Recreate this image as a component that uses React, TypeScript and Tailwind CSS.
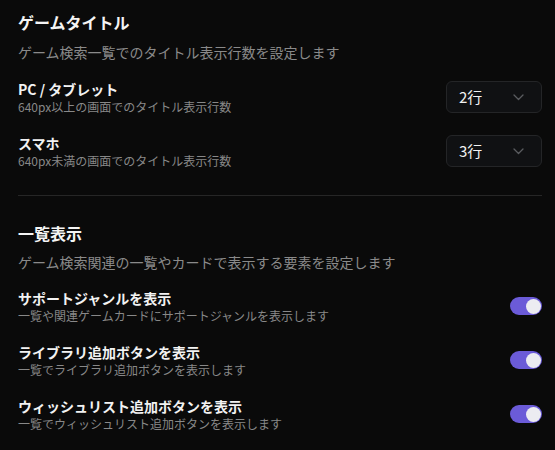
import React from "react";

function Select({ value }: { value: string }) {
  return (
    <div className="flex h-8 w-[96px] shrink-0 items-center justify-between rounded-md border border-[#242527] bg-[#101113] pl-3 pr-[17px]">
      <span className="text-[15px] leading-5 text-[#f2f2f2]">{value}</span>
      <svg width="11" height="7" viewBox="0 0 11 7" fill="none">
        <path d="M1 1l4.5 4.5L10 1" stroke="#5a5c60" strokeWidth="1.3" strokeLinecap="round" strokeLinejoin="round" />
      </svg>
    </div>
  );
}

function Toggle() {
  return (
    <div className="flex h-[18px] w-[32px] shrink-0 items-center justify-end rounded-full bg-[#6b5bd8] p-[1.5px]">
      <div className="h-[15px] w-[15px] rounded-full bg-[#ececf1]" />
    </div>
  );
}

function Row({ title, sub, right }: { title: string; sub: string; right: React.ReactNode }) {
  return (
    <div className="flex items-center justify-between">
      <div className="flex flex-col">
        <div className="text-sm font-bold leading-5 text-[#f2f2f2]">{title}</div>
        <div className="text-xs leading-4 text-[#888888]">{sub}</div>
      </div>
      {right}
    </div>
  );
}

export default function App() {
  return (
    <div
      className="min-h-[450px] bg-[#0a0a0a] pl-[18px] pr-[13px] pt-[10px]"
      style={{ fontFamily: '"Noto Sans CJK JP", "Noto Sans", sans-serif' }}
    >
      <section>
        <h2 className="text-base font-bold leading-6 text-[#f4f4f4]">ゲームタイトル</h2>
        <p className="mt-2 text-sm leading-5 text-[#8a8a8a]">ゲーム検索一覧でのタイトル表示行数を設定します</p>
        <div className="mt-[17px] flex flex-col gap-[18px]">
          <Row title="PC / タブレット" sub="640px以上の画面でのタイトル表示行数" right={<Select value="2行" />} />
          <Row title="スマホ" sub="640px未満の画面でのタイトル表示行数" right={<Select value="3行" />} />
        </div>
      </section>
      <div className="mb-[25px] mt-[26px] h-px bg-[#262626]" />
      <section>
        <h2 className="text-base font-bold leading-6 text-[#f4f4f4]">一覧表示</h2>
        <p className="mt-[7px] text-sm leading-5 text-[#8a8a8a]">ゲーム検索関連の一覧やカードで表示する要素を設定します</p>
        <div className="mt-4 flex flex-col gap-[18px]">
          <Row title="サポートジャンルを表示" sub="一覧や関連ゲームカードにサポートジャンルを表示します" right={<Toggle />} />
          <Row title="ライブラリ追加ボタンを表示" sub="一覧でライブラリ追加ボタンを表示します" right={<Toggle />} />
          <Row title="ウィッシュリスト追加ボタンを表示" sub="一覧でウィッシュリスト追加ボタンを表示します" right={<Toggle />} />
        </div>
      </section>
    </div>
  );
}
